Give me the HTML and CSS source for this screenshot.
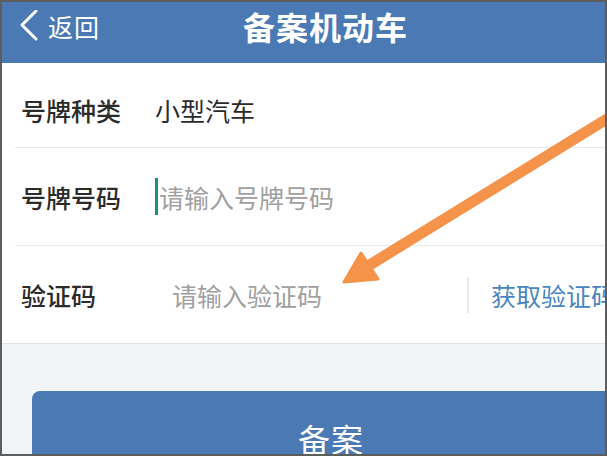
FILE: index.html
```html
<!DOCTYPE html>
<html lang="zh-CN">
<head>
<meta charset="utf-8">
<link rel="stylesheet" href="styles.css">
</head>
<body>
<div class="frame">
  <header class="topbar">
    <div class="back">
      <svg class="chev" width="20" height="32" viewBox="0 0 20 32"><polyline points="17,1 3,15 17,29" fill="none" stroke="#fff" stroke-width="3" stroke-linecap="round" stroke-linejoin="round"/></svg>
      <span class="back-text">返回</span>
    </div>
    <h1 class="title">备案机动车</h1>
  </header>
  <section class="form">
    <div class="row row-first">
      <span class="label">号牌种类</span>
      <span class="value">小型汽车</span>
    </div>
    <div class="row">
      <span class="label">号牌号码</span>
      <span class="cursor"></span>
      <span class="placeholder">请输入号牌号码</span>
    </div>
    <div class="row row-last">
      <span class="label label-code">验证码</span>
      <span class="placeholder code-ph">请输入验证码</span>
      <span class="vline"></span>
      <span class="getcode">获取验证码</span>
    </div>
  </section>
  <section class="actions">
    <div class="btn">备案</div>
  </section>
  <svg class="arrow" width="607" height="456" viewBox="0 0 607 456">
    <line x1="615" y1="114" x2="368" y2="266" stroke="#f5934b" stroke-width="11" stroke-linecap="round"/>
    <polygon points="344,282 378,279 361,253" fill="#f5934b" stroke="#f5934b" stroke-width="3" stroke-linejoin="round"/>
  </svg>
</div>
</body>
</html>
```
FILE: styles.css
```css
html, body {
  margin: 0;
  padding: 0;
  background: #fff;
}
body {
  font-family: "Noto Sans CJK SC", "Noto Sans", sans-serif;
}
.frame {
  position: relative;
  width: 607px;
  height: 456px;
  box-sizing: border-box;
  border: 2px solid #5d5d5d;
  overflow: hidden;
  background: #f2f5f7;
}
.topbar {
  height: 61px;
  background: #4a79b3;
  display: flex;
  align-items: flex-start;
  padding-top: 4px;
  box-sizing: border-box;
  color: #fff;
}
.back {
  display: flex;
  align-items: center;
  height: 40px;
  margin-left: 17px;
}
.chev {
  display: block;
}
.back-text {
  font-size: 25px;
  line-height: 40px;
  margin-left: 9px;
  letter-spacing: 1px;
}
.title {
  margin: 0 0 0 143px;
  font-size: 32px;
  line-height: 40px;
  font-weight: 700;
  letter-spacing: 1px;
}
.form {
  background: #fff;
  border-bottom: 1px solid #e1e4e7;
}
.row {
  display: flex;
  align-items: center;
  height: 98px;
  box-sizing: border-box;
  margin-left: 13px;
  padding-left: 6px;
  border-bottom: 1px solid #e9e9e9;
  font-size: 25px;
  white-space: nowrap;
}
.row-first {
  height: 85px;
  padding-top: 10px;
}
.row-last {
  border-bottom: none;
  height: 97px;
}
.label {
  color: #2b2b2b;
  width: 134px;
  flex: none;
  font-weight: 500;
}
.label-code {
  width: 151px;
}
.value {
  color: #2b2b2b;
}
.cursor {
  width: 3px;
  height: 37px;
  background: #1f8f7c;
  margin-right: 1px;
  flex: none;
}
.placeholder {
  color: #a0a0a0;
}
.code-ph {
  width: 145px;
  flex: none;
}
.vline {
  width: 2px;
  height: 36px;
  background: #e8e8e8;
  margin-left: 150px;
  flex: none;
}
.getcode {
  color: #4a86c2;
  margin-left: 22px;
}
.actions {
  padding: 47px 0 0 30px;
}
.btn {
  width: 598px;
  height: 100px;
  background: #4a79b3;
  border-radius: 8px;
  color: #fff;
  font-size: 32px;
  line-height: 40px;
  padding-top: 27px;
  box-sizing: border-box;
  text-align: center;
  letter-spacing: 1px;
}
.arrow {
  position: absolute;
  left: -2px;
  top: -2px;
  pointer-events: none;
}
```
